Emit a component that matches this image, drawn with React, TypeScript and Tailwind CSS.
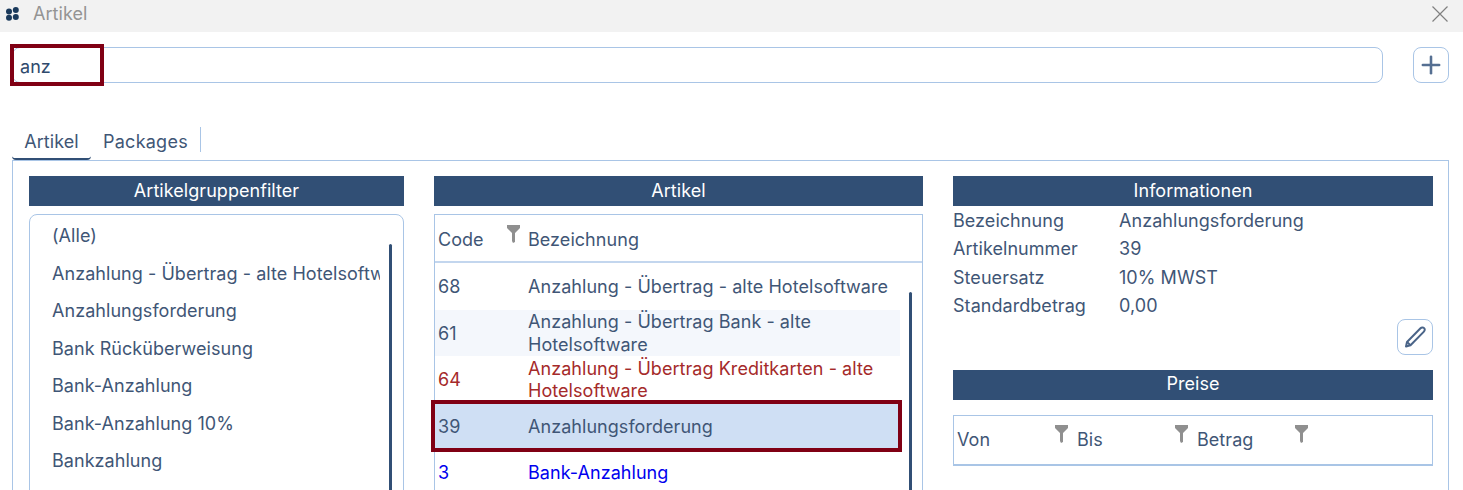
import { Plus } from 'lucide-react';

const groups = [
  '(Alle)',
  'Anzahlung - Übertrag - alte Hotelsoftware',
  'Anzahlungsforderung',
  'Bank Rücküberweisung',
  'Bank-Anzahlung',
  'Bank-Anzahlung 10%',
  'Bankzahlung',
];

const info = [
  ['Bezeichnung', 'Anzahlungsforderung'],
  ['Artikelnummer', '39'],
  ['Steuersatz', '10% MWST'],
  ['Standardbetrag', '0,00'],
];

const FilterIcon = ({ className = '' }: { className?: string }) => (
  <svg width="13" height="18" viewBox="0 0 13 18" className={className}>
    <path d="M0 0H13V3L8 8V17L6 18L5 16V8L0 3Z" fill="#8f8f8f" />
  </svg>
);

const SectionHeader = ({ title }: { title: string }) => (
  <div className="flex h-[30px] items-center justify-center bg-[#314f75] pb-[2px] text-white">
    {title}
  </div>
);

const App = () => {
  return (
    <div className="relative h-[490px] w-[1463px] overflow-hidden bg-white font-['Inter',sans-serif] text-[18px] tracking-[0.05px] text-[#3f5676]">
      {/* Title bar */}
      <div className="flex h-8 items-center bg-[#f2f2f2] pl-[6px] pr-[15px]">
        <svg width="13" height="14" viewBox="0 0 13 14" className="mb-[5px]">
          <circle cx="3" cy="4.5" r="3" fill="#1b3a5c" />
          <circle cx="9.8" cy="3" r="3" fill="#1b3a5c" />
          <circle cx="3" cy="10.8" r="3" fill="#1b3a5c" />
          <circle cx="9.8" cy="10" r="3" fill="#1b3a5c" />
        </svg>
        <span className="mb-[5px] ml-[14px] text-[#949494]">Artikel</span>
        <svg width="16" height="16" viewBox="0 0 16 16" className="mb-[5px] ml-auto" stroke="#808080" strokeWidth="1.2">
          <path d="M0.5 0.5L15.5 15.5M15.5 0.5L0.5 15.5" />
        </svg>
      </div>

      {/* Search */}
      <div className="mt-[15px] flex items-center pl-3 pr-[14px]">
        <div className="flex h-9 flex-1 items-center rounded-lg border border-[#a9c5e6] pl-[7px] pt-[2px] text-[#2f4a6d]">
          anz
        </div>
        <button className="ml-[30px] flex h-9 w-9 items-center justify-center rounded-lg border border-[#a9c5e6]">
          <Plus className="h-7 w-7 text-[#556f92]" strokeWidth={2.2} />
        </button>
      </div>

      {/* Tabs */}
      <div className="ml-3 mt-[45px] flex h-[32px] items-start">
        <div className="flex h-[32px] w-[79px] items-start justify-center rounded-b-sm border-b-2 border-[#314f75]">
          Artikel
        </div>
        <div className="ml-3 mt-[-1px] flex h-[25px] items-center border-r border-[#a9c5e6] pr-3 pt-[3px] tracking-[0.25px]">
          Packages
        </div>
      </div>

      {/* Panel */}
      <div className="mx-3 grid h-[400px] w-[1437px] grid-cols-[375px_489px_480px] gap-[30px] border border-[#a9c5e6] pl-4 pt-[15px]">
        {/* Group filter */}
        <div>
          <SectionHeader title="Artikelgruppenfilter" />
          <div className="relative mt-2 h-[300px] rounded-lg border border-[#a9c5e6] pl-[22px] pt-[2px]">
            {groups.map((group) => (
              <div key={group} className="flex h-[37.5px] w-[328px] items-center overflow-hidden whitespace-nowrap">
                {group}
              </div>
            ))}
            <div className="absolute right-[11px] top-[29px] h-[300px] w-[3px] rounded-full bg-[#314f75]" />
          </div>
        </div>

        {/* Articles */}
        <div>
          <SectionHeader title="Artikel" />
          <div className="relative mt-2 h-[300px] border border-[#a9c5e6]">
            <div className="flex h-[48px] items-center border-b-2 border-[#c3d6ee]">
              <span className="w-[93px] pl-[3px] pt-[2px]">Code</span>
              <span className="pt-[2px]">Bezeichnung</span>
            </div>
            <FilterIcon className="absolute left-[72px] top-[10px]" />
            <div className="w-[465px]">
              <div className="flex h-[47px] items-center pl-[3px]">
                <span className="w-[90px]">68</span>
                <span className="flex-1">Anzahlung - Übertrag - alte Hotelsoftware</span>
              </div>
              <div className="flex h-[46px] items-center bg-[#f4f7fc] pl-[3px] leading-[23px]">
                <span className="w-[90px]">61</span>
                <span className="flex-1">Anzahlung - Übertrag Bank - alte<br />Hotelsoftware</span>
              </div>
              <div className="flex h-[46px] items-center pl-[3px] pt-[1px] leading-[22px] text-[#a52a2a]">
                <span className="w-[90px]">64</span>
                <span className="flex-1">Anzahlung - Übertrag Kreditkarten - alte<br />Hotelsoftware</span>
              </div>
              <div className="flex h-[46px] items-center bg-[#cfdff4] pl-[3px] pt-[2px]">
                <span className="w-[90px]">39</span>
                <span className="flex-1">Anzahlungsforderung</span>
              </div>
              <div className="flex h-[46px] items-center pl-[3px] pt-[2px] text-[#0000ee]">
                <span className="w-[90px]">3</span>
                <span className="flex-1">Bank-Anzahlung</span>
              </div>
            </div>
            <div className="absolute right-[10px] top-[77px] h-[300px] w-[3px] rounded-full bg-[#314f75]" />
          </div>
        </div>

        {/* Information */}
        <div>
          <SectionHeader title="Informationen" />
          <div className="mt-[0.4px]">
            {info.map(([label, value]) => (
              <div key={label} className="flex h-[28.3px] items-center">
                <span className="w-[166px]">{label}</span>
                <span>{value}</span>
              </div>
            ))}
          </div>
          <div className="mt-[-0.6px] flex justify-end">
            <button className="flex h-9 w-9 items-center justify-center rounded-lg border border-[#a9c5e6]">
              <svg width="24" height="24" viewBox="0 0 24 24" fill="none" stroke="#4a6488" strokeWidth="2" strokeLinejoin="round">
                <path d="M3 21.5L4 17L17.5 3.3C18.6 2.2 20.2 2.2 21.1 3.1C22 4 22 5.6 20.9 6.6L7.5 20.3Z" />
                <path d="M4 17L7.5 20.3" />
              </svg>
            </button>
          </div>
          <div className="mt-[15px]">
            <SectionHeader title="Preise" />
          </div>
          <div className="mt-[15px] flex h-[51px] items-center border border-b-2 border-[#a9c5e6] pl-[3px]">
            {['Von', 'Bis', 'Betrag'].map((column) => (
              <div key={column} className="relative w-[120px]">
                {column}
                <FilterIcon className="absolute left-[98px] top-[-1px]" />
              </div>
            ))}
          </div>
        </div>
      </div>

      {/* Highlight frames */}
      <div className="absolute left-[10px] top-[44px] h-[42px] w-[94px] border-4 border-[#800014]" />
      <div className="absolute left-[431px] top-[400px] h-[52px] w-[471px] border-4 border-[#800014]" />
    </div>
  );
};

export default App;
